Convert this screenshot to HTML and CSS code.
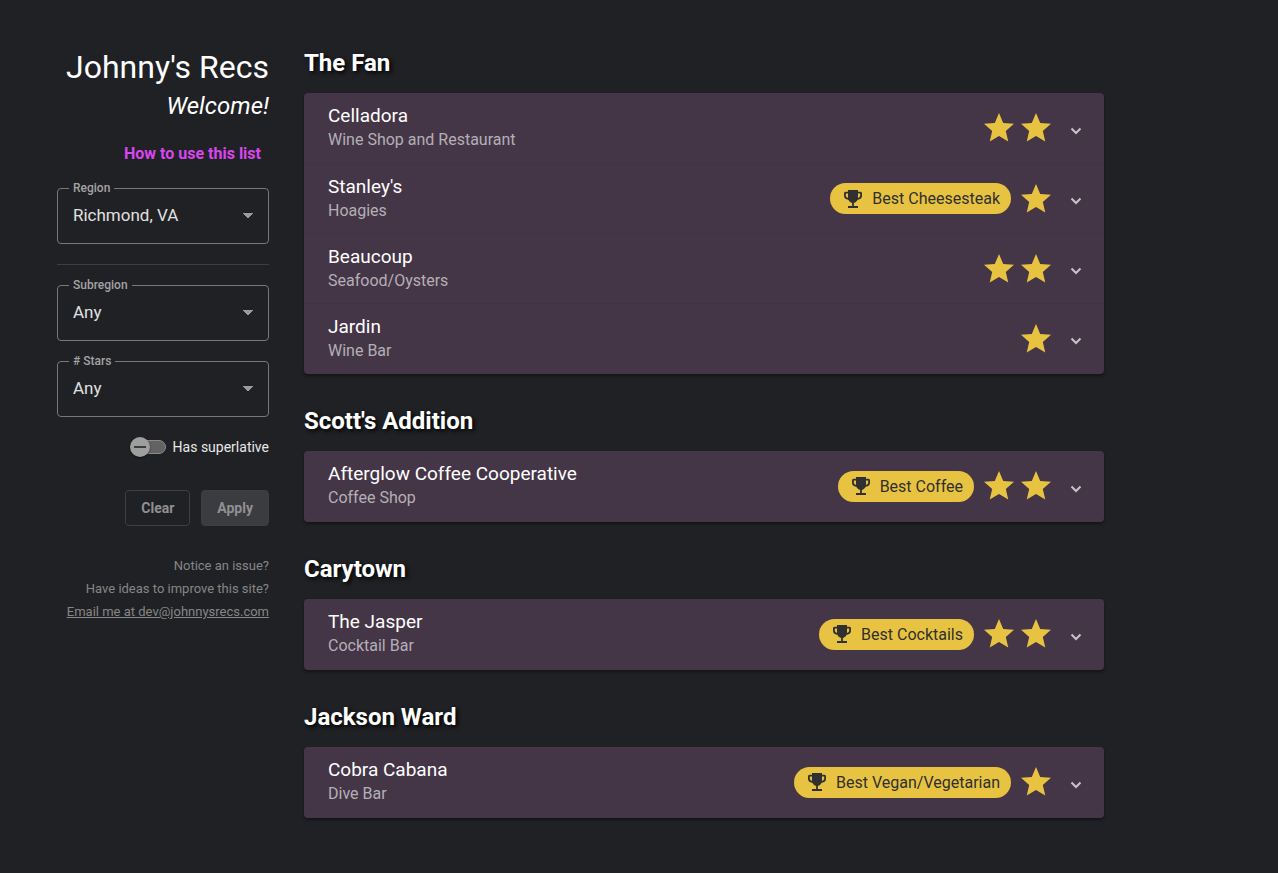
FILE: index.html
```html
<!DOCTYPE html>
<html lang="en">
<head>
<meta charset="utf-8">
<meta name="viewport" content="width=device-width, initial-scale=1">
<title>Johnny's Recs</title>
<link rel="stylesheet" href="styles.css">
</head>
<body>
<svg class="sprite" aria-hidden="true">
  <symbol id="star" viewBox="2 2 20 20"><path d="M12 17.270 18.180 21 16.540 13.970 22 9.240 14.810 8.630 12 2 9.190 8.630 2 9.240 7.460 13.970 5.820 21Z"/></symbol>
  <symbol id="trophy" viewBox="0 0 18 18"><path fill-rule="evenodd" d="M4 0H14V1.700H16.500Q18 1.700 18 3.300V5.500Q18 9.200 13.800 9.800 12.400 12.400 9.900 12.900V16H14V18H4V16H8.100V12.900Q5.600 12.400 4.200 9.800 0 9.200 0 5.500V3.300Q0 1.700 1.500 1.700H4ZM4 3.400H1.800V5.400Q1.800 7.300 4 8ZM14 3.400V8Q16.200 7.300 16.200 5.400V3.400Z"/></symbol>
  <symbol id="chevron" viewBox="0 0 12 8"><path d="M1.500 1.500 6 6 10.500 1.500" fill="none" stroke="currentColor" stroke-width="2"/></symbol>
</svg>
<div class="layout">
  <aside class="sidebar">
    <h1 class="title">Johnny's Recs</h1>
    <p class="welcome">Welcome!</p>
    <button class="guide" type="button">How to use this list</button>
    <form class="filters">
      <fieldset class="field">
        <legend class="field-legend"><label for="region">Region</label></legend>
        <select class="select" id="region"><option>Richmond, VA</option></select>
      </fieldset>
      <hr class="divider">
      <fieldset class="field">
        <legend class="field-legend"><label for="subregion">Subregion</label></legend>
        <select class="select" id="subregion"><option>Any</option></select>
      </fieldset>
      <fieldset class="field">
        <legend class="field-legend"><label for="stars"># Stars</label></legend>
        <select class="select" id="stars"><option>Any</option></select>
      </fieldset>
      <label class="toggle"><input class="switch" type="checkbox" role="switch">Has superlative</label>
      <div class="actions">
        <button class="button outlined" type="button" disabled>Clear</button>
        <button class="button filled" type="submit" disabled>Apply</button>
      </div>
    </form>
    <footer class="contact">
      <p>Notice an issue?</p>
      <p>Have ideas to improve this site?</p>
      <a href="mailto:dev@johnnysrecs.com">Email me at dev@johnnysrecs.com</a>
    </footer>
  </aside>
  <main class="main">
    <section class="area">
      <h2 class="area-name">The Fan</h2>
      <div class="panel">
        <button class="row" type="button"><span class="place"><span class="name">Celladora</span><span class="kind">Wine Shop and Restaurant</span></span><span class="marks"><svg class="star"><use href="#star"/></svg><svg class="star"><use href="#star"/></svg></span><svg class="chevron"><use href="#chevron"/></svg></button>
        <button class="row" type="button"><span class="place"><span class="name">Stanley's</span><span class="kind">Hoagies</span></span><span class="marks"><span class="badge"><svg class="trophy"><use href="#trophy"/></svg>Best Cheesesteak</span><svg class="star"><use href="#star"/></svg></span><svg class="chevron"><use href="#chevron"/></svg></button>
        <button class="row" type="button"><span class="place"><span class="name">Beaucoup</span><span class="kind">Seafood/Oysters</span></span><span class="marks"><svg class="star"><use href="#star"/></svg><svg class="star"><use href="#star"/></svg></span><svg class="chevron"><use href="#chevron"/></svg></button>
        <button class="row" type="button"><span class="place"><span class="name">Jardin</span><span class="kind">Wine Bar</span></span><span class="marks"><svg class="star"><use href="#star"/></svg></span><svg class="chevron"><use href="#chevron"/></svg></button>
      </div>
    </section>
    <section class="area">
      <h2 class="area-name">Scott's Addition</h2>
      <div class="panel">
        <button class="row" type="button"><span class="place"><span class="name">Afterglow Coffee Cooperative</span><span class="kind">Coffee Shop</span></span><span class="marks"><span class="badge"><svg class="trophy"><use href="#trophy"/></svg>Best Coffee</span><svg class="star"><use href="#star"/></svg><svg class="star"><use href="#star"/></svg></span><svg class="chevron"><use href="#chevron"/></svg></button>
      </div>
    </section>
    <section class="area">
      <h2 class="area-name">Carytown</h2>
      <div class="panel">
        <button class="row" type="button"><span class="place"><span class="name">The Jasper</span><span class="kind">Cocktail Bar</span></span><span class="marks"><span class="badge"><svg class="trophy"><use href="#trophy"/></svg>Best Cocktails</span><svg class="star"><use href="#star"/></svg><svg class="star"><use href="#star"/></svg></span><svg class="chevron"><use href="#chevron"/></svg></button>
      </div>
    </section>
    <section class="area">
      <h2 class="area-name">Jackson Ward</h2>
      <div class="panel">
        <button class="row" type="button"><span class="place"><span class="name">Cobra Cabana</span><span class="kind">Dive Bar</span></span><span class="marks"><span class="badge"><svg class="trophy"><use href="#trophy"/></svg>Best Vegan/Vegetarian</span><svg class="star"><use href="#star"/></svg></span><svg class="chevron"><use href="#chevron"/></svg></button>
      </div>
    </section>
  </main>
</div>
</body>
</html>
```
FILE: styles.css
```css
* { box-sizing: border-box; }
body {
  margin: 0;
  background: #202124;
  color: #fff;
  font-family: Roboto, "Liberation Sans", sans-serif;
}
h1, h2, p { margin: 0; }
button, select { font-family: inherit; }
.sprite { display: none; }
.layout {
  display: flex;
  gap: 35px;
  padding: 47px 57px 24px;
}
.sidebar {
  display: flex;
  flex-direction: column;
  flex: 0 0 212px;
  text-align: right;
}
.title {
  font-size: 32px;
  font-weight: 400;
  line-height: 40px;
}
.welcome {
  font-size: 24px;
  font-style: italic;
  line-height: 38px;
}
.guide {
  align-self: flex-end;
  margin-top: 11px;
  padding: 0 8px;
  border: 0;
  background: none;
  color: #d946ef;
  font-size: 16px;
  font-weight: 700;
  line-height: 36px;
}
.filters {
  display: flex;
  flex-direction: column;
  margin-top: 9px;
}
.field {
  width: 100%;
  min-width: 0;
  height: 63px;
  margin: 0 0 13px;
  padding: 0;
  border: 1px solid #77787b;
  border-radius: 4px;
  text-align: left;
}
.field-legend {
  margin-left: 11px;
  padding: 0 4px;
  color: #a3a3a4;
  font-size: 12px;
  font-weight: 500;
  line-height: 14px;
}
.select {
  display: block;
  width: 100%;
  height: 40px;
  padding: 0 15px;
  border: 0;
  appearance: none;
  background:
    linear-gradient(to bottom right, #9b9b9c 50%, transparent 51%) right 15px center / 5px 5px no-repeat,
    linear-gradient(to bottom left, #9b9b9c 50%, transparent 51%) right 20px center / 5px 5px no-repeat;
  color: #e0e0e0;
  font-size: 17px;
}
.divider {
  width: 100%;
  height: 1px;
  margin: 7px 0 13px;
  border: 0;
  background: #3d3e41;
}
.toggle {
  display: flex;
  align-items: center;
  justify-content: flex-end;
  gap: 7px;
  margin-top: 7px;
  color: #e8e8e9;
  font-size: 14px;
  line-height: 20px;
}
.switch {
  position: relative;
  width: 34px;
  height: 14px;
  margin: 0;
  border: 1px solid #8f8790;
  border-radius: 7px;
  appearance: none;
  background: #636363;
}
.switch::before {
  content: "";
  position: absolute;
  top: -4px;
  left: -3px;
  width: 20px;
  height: 20px;
  border-radius: 50%;
  background: linear-gradient(#3c3c3c, #3c3c3c) center / 12px 2px no-repeat #9e9e9e;
  box-shadow: 0 1px 2px #0008;
}
.actions {
  display: flex;
  justify-content: flex-end;
  gap: 11px;
  margin-top: 33px;
}
.button {
  height: 36px;
  border: 1px solid #3d3e41;
  border-radius: 4px;
  background: none;
  color: #909091;
  font-size: 14px;
  font-weight: 700;
}
.outlined { padding: 0 15px; }
.filled {
  padding: 0 15px;
  background: #3b3c3f;
}
.contact {
  margin-top: 28px;
  color: #868687;
  font-size: 13px;
  line-height: 23px;
}
.contact a { color: inherit; }
.main {
  flex: 1;
  min-width: 0;
  max-width: 800px;
}
.area { margin-bottom: 31px; }
.area-name {
  margin-bottom: 14px;
  font-size: 24px;
  font-weight: 700;
  line-height: 32px;
  text-shadow: 2px 2px 4px #000;
}
.panel {
  overflow: hidden;
  padding-bottom: 1px;
  border-radius: 4px;
  background: #443647;
  box-shadow: 0 2px 3px #0006;
}
.row {
  display: flex;
  align-items: center;
  width: 100%;
  min-height: 70px;
  padding: 0 22px 0 24px;
  border: 0;
  background: none;
  color: #fff;
  text-align: left;
}
.row + .row { border-top: 1px solid #403343; }
.place {
  display: flex;
  flex: 1;
  flex-direction: column;
  font-size: 16px;
  line-height: 24px;
}
.name { font-size: 19px; }
.kind { color: #b4afb5; }
.marks {
  display: flex;
  align-items: center;
  gap: 7px;
}
.star {
  width: 30px;
  height: 30px;
  fill: #e8c341;
}
.badge {
  display: flex;
  align-items: center;
  gap: 10px;
  margin-right: 3px;
  padding: 0 11px 0 14px;
  border-radius: 16px;
  background: #e8c341;
  color: #303030;
  font-size: 16px;
  line-height: 31px;
}
.trophy {
  width: 18px;
  height: 18px;
  fill: #303030;
}
.chevron {
  width: 12px;
  height: 8px;
  margin: 5px 0 0 19px;
  color: #c7c3c8;
}
```
